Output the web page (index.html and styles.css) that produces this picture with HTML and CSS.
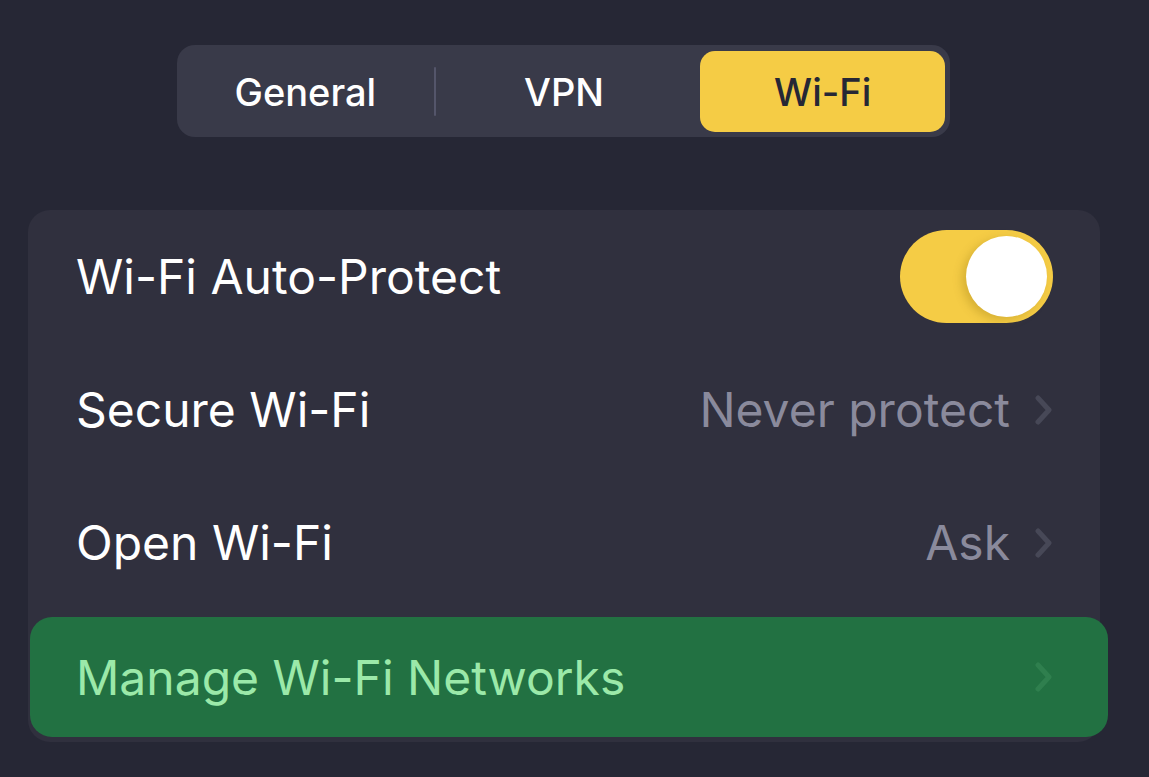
FILE: index.html
```html
<!DOCTYPE html>
<html lang="en">
<head>
<meta charset="utf-8">
<title>Wi-Fi settings</title>
<link rel="stylesheet" href="styles.css">
</head>
<body>
<div class="page">
  <div class="seg-wrap">
    <div class="segmented">
      <div class="seg">General</div>
      <div class="seg-divider"></div>
      <div class="seg">VPN</div>
      <div class="seg-divider hidden"></div>
      <div class="seg active">Wi-Fi</div>
    </div>
  </div>

  <div class="card">
    <div class="row">
      <span class="label">Wi-Fi Auto-Protect</span>
      <div class="toggle"><div class="knob"></div></div>
    </div>
    <div class="row">
      <span class="label">Secure Wi-Fi</span>
      <div class="value">
        <span>Never protect</span>
        <svg class="chev" width="18" height="30" viewBox="0 0 18 30"><path d="M3 3 L14 15 L3 27" fill="none" stroke="currentColor" stroke-width="5" stroke-linecap="round" stroke-linejoin="round"/></svg>
      </div>
    </div>
    <div class="row">
      <span class="label">Open Wi-Fi</span>
      <div class="value">
        <span>Ask</span>
        <svg class="chev" width="18" height="30" viewBox="0 0 18 30"><path d="M3 3 L14 15 L3 27" fill="none" stroke="currentColor" stroke-width="5" stroke-linecap="round" stroke-linejoin="round"/></svg>
      </div>
    </div>
    <div class="row green">
      <span class="label">Manage Wi-Fi Networks</span>
      <div class="value">
        <svg class="chev" width="18" height="30" viewBox="0 0 18 30"><path d="M3 3 L14 15 L3 27" fill="none" stroke="currentColor" stroke-width="5" stroke-linecap="round" stroke-linejoin="round"/></svg>
      </div>
    </div>
  </div>
</div>
</body>
</html>
```

FILE: styles.css
```css
html, body {
  margin: 0;
  padding: 0;
  background: #262735;
}

body {
  font-family: "Inter", "Noto Sans", sans-serif;
  width: 1149px;
  height: 777px;
  overflow: hidden;
}

.page {
  display: flex;
  flex-direction: column;
}

.seg-wrap {
  padding: 45px 0 0 177px;
}

.segmented {
  width: 773px;
  height: 92px;
  box-sizing: border-box;
  padding: 6px 5px 5px 6px;
  background: #393a49;
  border-radius: 18px;
  display: grid;
  grid-template-columns: 1fr 2px 1fr 2px 1fr;
  column-gap: 6px;
  align-items: center;
}

.seg {
  height: 100%;
  display: flex;
  align-items: center;
  justify-content: center;
  color: #ffffff;
  font-size: 38px;
  font-weight: 500;
  border-radius: 15px;
}

.seg.active {
  background: #f5cc45;
  color: #262735;
}

.seg-divider {
  width: 2px;
  height: 49px;
  background: #54556a;
  border-radius: 1px;
}

.seg-divider.hidden {
  background: transparent;
}

.card {
  margin: 73px 49px 0 28px;
  background: #30303e;
  border-radius: 22px;
  padding-bottom: 5px;
  display: flex;
  flex-direction: column;
}

.row {
  height: 133px;
  display: flex;
  align-items: center;
  justify-content: space-between;
  padding: 0 47px 0 48px;
}

.label {
  color: #ffffff;
  font-size: 48px;
  font-weight: 400;
}

.value {
  display: flex;
  align-items: center;
  gap: 25px;
  color: #8a8a9c;
  font-size: 48px;
}

.chev {
  color: #474857;
  display: block;
}

.toggle {
  width: 153px;
  height: 93px;
  box-sizing: border-box;
  padding: 6px;
  border-radius: 47px;
  background: #f5cc45;
  display: flex;
  justify-content: flex-end;
  align-items: center;
}

.knob {
  width: 81px;
  height: 81px;
  border-radius: 50%;
  background: #ffffff;
  box-shadow: -4px 3px 10px rgba(120, 90, 0, 0.25);
}

.row.green {
  height: 120px;
  margin: 8px -8px 0 2px;
  padding: 0 55px 0 46px;
  background: #227142;
  border-radius: 22px;
}

.row.green .label {
  color: #9be9a9;
}

.row.green .chev {
  color: #2f7f4e;
}
```
